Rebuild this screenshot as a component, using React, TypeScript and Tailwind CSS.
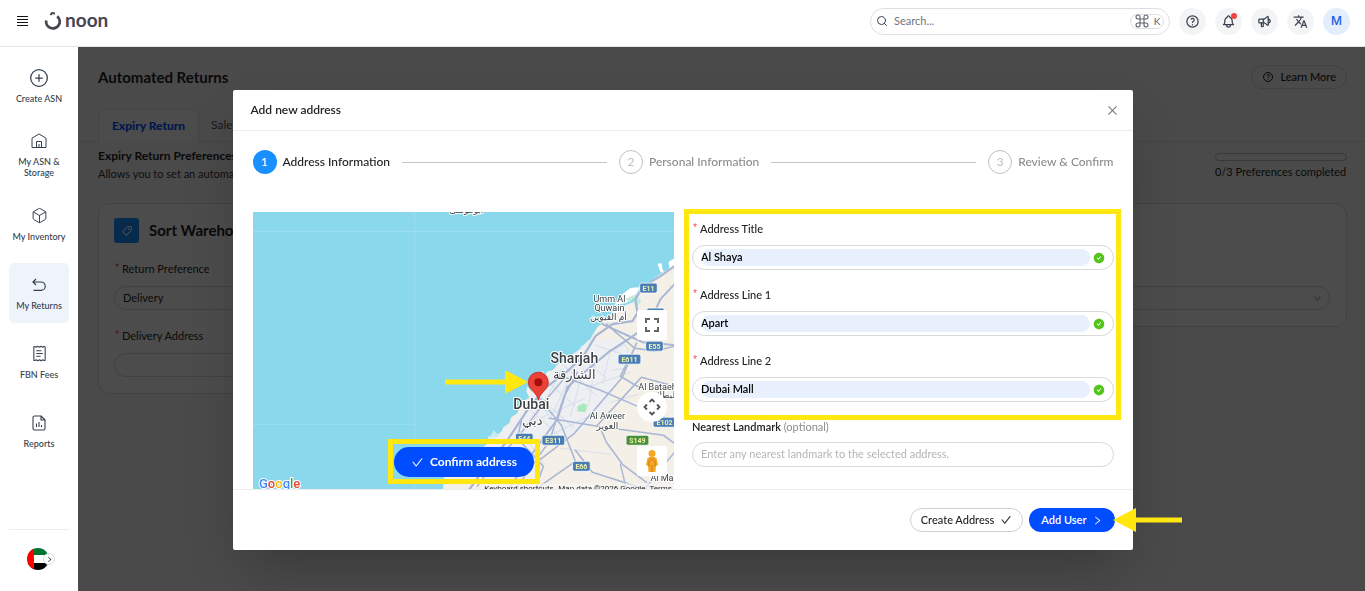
import React, { useState } from "react";
import { CirclePlus, Box, ReceiptText, Command, Search } from "lucide-react";
import { TbSpeakerphone, TbBell, TbHelp } from "react-icons/tb";
import { MdTranslate } from "react-icons/md";
import {
  AiOutlineCheck,
  AiOutlineClose,
  AiOutlineRight,
  AiOutlineDown,
  AiOutlineTag,
  AiFillCheckCircle,
} from "react-icons/ai";

const HouseIcon = () => (
  <svg width="18" height="18" viewBox="0 0 18 18" fill="none" stroke="currentColor">
    <path d="M2 6.2 9 2l7 4.2v9.3H2z" strokeLinejoin="round" />
    <path d="M6.5 15.5v-6h5v6M9 12v3.500" />
  </svg>
);

const ReturnIcon = () => (
  <svg width="18" height="18" viewBox="0 0 18 18" fill="none" stroke="currentColor" strokeWidth="1.200">
    <path d="M6 3 3 6l3 3M3.200 6H11a4.200 4.200 0 0 1 0 8.400H3.500" />
  </svg>
);

const ReportIcon = () => (
  <svg width="18" height="18" viewBox="0 0 18 18" fill="none" stroke="currentColor" strokeWidth="1.100">
    <path d="M11 2H4.500A1.500 1.500 0 0 0 3 3.500v11A1.500 1.500 0 0 0 4.500 16h9a1.500 1.500 0 0 0 1.500-1.500V6zM11 2v4h4" strokeLinejoin="round" />
    <path d="M6.500 9.500V13M9 8v5M11.500 11v2" />
  </svg>
);

const navItems = [
  { label: "Create ASN", icon: <CirclePlus size={20} strokeWidth={1.5} /> },
  { label: "My ASN & Storage", icon: <HouseIcon /> },
  { label: "My Inventory", icon: <Box size={17} strokeWidth={1.4} /> },
  { label: "My Returns", icon: <ReturnIcon />, active: true },
  { label: "FBN Fees", icon: <ReceiptText size={17} strokeWidth={1.5} /> },
  { label: "Reports", icon: <ReportIcon /> },
];

const Required = () => (
  <span className="font-['Liberation_Mono',monospace] text-[10px] leading-4 text-[#ff4d4f]">*</span>
);

function Header() {
  return (
    <header className="relative z-30 flex h-[47px] items-center border-b border-[#e5e5e5] bg-white pb-1 pl-[17px] pr-[15px]">
      <button aria-label="Menu" className="flex h-[10px] w-[11px] flex-col justify-between">
        <span className="h-px w-full bg-[#111]" />
        <span className="h-px w-full bg-[#111]" />
        <span className="h-px w-full bg-[#111]" />
        <span className="h-px w-full bg-[#111]" />
      </button>
      <a href="#" className="ml-4 flex items-center gap-[3px] text-[#45454f]">
        <svg width="18" height="20" viewBox="0 0 18 20" fill="none" stroke="currentColor">
          <path d="M2.200 9.500a6.800 6.800 0 1 0 11-4.200" strokeWidth="2.800" />
          <path d="M6.500 4 8 2l3 .4" strokeWidth="2" />
        </svg>
        <span className="pb-[3px] text-[19px] font-bold leading-5">noon</span>
      </a>
      <div className="ml-auto flex items-center gap-[9px] text-[#3b4150]">
        <div className="flex h-[27px] w-[300px] items-center rounded-full border border-[#dcdfe4] px-[5px]">
          <Search size={12} strokeWidth={2} />
          <input
            type="text"
            aria-label="Search"
            placeholder="Search..."
            className="ml-[6px] min-w-0 flex-1 text-[11px] outline-none placeholder:text-[#707580]"
          />
          <span className="flex h-[15px] w-[34px] items-center justify-center gap-1 rounded-full border border-[#dcdfe4] text-[10px] text-[#5b606b]">
            <Command size={16} strokeWidth={1.6} className="shrink-0" />K
          </span>
        </div>
        <button aria-label="Help" className="flex size-[27px] items-center justify-center rounded-full bg-[#f3f4f6]">
          <TbHelp size={15} />
        </button>
        <button aria-label="Notifications" className="relative flex size-[27px] items-center justify-center rounded-full bg-[#f3f4f6]">
          <TbBell size={15} />
          <span className="absolute right-[5px] top-[5px] size-[6px] rounded-full bg-[#ef4444]" />
        </button>
        <button aria-label="Announcements" className="flex size-[27px] items-center justify-center rounded-full bg-[#f3f4f6]">
          <TbSpeakerphone size={15} />
        </button>
        <button aria-label="Language" className="flex size-[27px] items-center justify-center rounded-full bg-[#f3f4f6]">
          <MdTranslate size={15} />
        </button>
        <button className="flex size-[27px] items-center justify-center rounded-full bg-[#e3eefc] font-['Inter',sans-serif] text-[12px] font-medium text-[#1d5be0]">
          M
        </button>
      </div>
    </header>
  );
}

function Sidebar() {
  return (
    <aside className="relative z-30 flex w-[78px] shrink-0 flex-col bg-white px-[9px] pt-[9px]">
      <nav className="flex flex-col gap-[9px]">
        {navItems.map((item) => (
          <a
            key={item.label}
            href="#"
            className={
              item.active
                ? "flex h-[60px] flex-col items-center justify-center gap-[6px] rounded-[5px] bg-[#eff3fa] text-[#34404f]"
                : "flex h-[60px] flex-col items-center justify-center gap-[6px] rounded-[5px] text-[#34404f]"
            }
          >
            <span className="flex h-[18px] items-center">{item.icon}</span>
            <span className="text-center text-[9px] font-medium leading-[11px]">{item.label}</span>
          </a>
        ))}
      </nav>
      <div className="mb-[21px] mt-auto border-t border-[#ececec] pl-[18px] pt-[18px]">
        <button aria-label="Change country" className="relative block">
          <svg width="22" height="22" viewBox="0 0 22 22">
            <clipPath id="flag">
              <circle cx="11" cy="11" r="11" />
            </clipPath>
            <g clipPath="url(#flag)">
              <rect width="22" height="22" fill="#fff" />
              <rect width="22" height="7" fill="#00732f" />
              <rect y="15" width="22" height="7" fill="#000" />
              <rect width="7" height="22" fill="#f00" />
            </g>
          </svg>
          <span className="absolute -right-[6px] top-[5px] flex size-3 items-center justify-center rounded-full border border-[#ddd] bg-white">
            <AiOutlineRight size={7} />
          </span>
        </button>
      </div>
    </aside>
  );
}

function ReturnsPage() {
  return (
    <main className="min-w-0 flex-1 bg-[#f8f8fa] pt-[18px] text-[#1f1f22]">
      <div className="flex h-6 items-center justify-between pl-5 pr-[18px]">
        <h1 className="text-[15px] font-bold">Automated Returns</h1>
        <button className="flex h-6 items-center gap-[6px] rounded-full border border-[#d9d9d9] px-[10px] text-[11px] font-medium">
          <TbHelp size={12} />
          Learn More
        </button>
      </div>
      <div className="mt-5 flex border-b border-[#e4e4e4] pl-5 text-[12px]">
        <button className="-mb-px h-[33px] w-[101px] rounded-t-lg border border-b-0 border-[#e4e4e4] bg-white font-black text-[#0050ff]">
          Expiry Return
        </button>
        <button className="px-3 text-[#555]">Sale Return</button>
      </div>
      <div className="flex justify-between pl-5 pr-[18px] pt-1">
        <div>
          <h2 className="pt-px text-[12px] font-bold leading-[18px]">Expiry Return Preferences</h2>
          <p className="text-[11px] leading-[18px] text-[#333]">Allows you to set an automatic preference</p>
        </div>
        <div className="w-[132px] pt-[7px]">
          <div className="h-2 rounded-full border border-[#bbb]" />
          <p className="pt-[3px] text-[11px] leading-4">0/3 Preferences completed</p>
        </div>
      </div>
      <div className="mt-5 grid grid-cols-2 items-start gap-4 pl-5 pr-[18px] text-[11px]">
        <section className="rounded-xl border border-[#dcdcdc] bg-white px-[15px] pb-4 pt-[14px]">
          <div className="flex h-[25px] items-center gap-[10px]">
            <span className="flex size-[25px] items-center justify-center rounded-[3px] bg-[#1890ff] text-white">
              <AiOutlineTag size={12} />
            </span>
            <h3 className="text-[15px] font-bold">Sort Warehouse</h3>
          </div>
          <label htmlFor="preference" className="mt-[18px] flex h-4 items-center gap-[2px]">
            <Required /> Return Preference
          </label>
          <select
            id="preference"
            className="mt-[9px] block h-6 w-full appearance-none rounded-full border border-[#d9d9d9] px-2"
          >
            <option>Delivery</option>
          </select>
          <label htmlFor="delivery" className="mt-[18px] flex h-4 items-center gap-[2px]">
            <Required /> Delivery Address
          </label>
          <input id="delivery" className="mt-[9px] block h-6 w-full rounded-full border border-[#d9d9d9] px-2" />
        </section>
        <section className="rounded-xl border border-[#dcdcdc] bg-white px-4 pb-4 pt-[82px]">
          <div className="relative">
            <select
              aria-label="Liquidation preference"
              className="block h-6 w-full appearance-none rounded-full border border-[#d9d9d9] px-2"
            />
            <AiOutlineDown size={9} className="absolute right-2 top-2 text-[#888]" />
          </div>
        </section>
      </div>
    </main>
  );
}

type ShieldProps = { x: number; y: number; label: string; green?: boolean };

const Shield = ({ x, y, label, green }: ShieldProps) => (
  <g>
    <rect
      x={x - label.length * 2.6 - 1}
      y={y - 5}
      width={label.length * 5.2 + 2}
      height="10"
      rx="2"
      fill={green ? "#4a8f3c" : "#4a7db5"}
      stroke="#fff"
      strokeWidth="0.8"
    />
    <text x={x} y={y + 3} fontSize="7" fontWeight="700" textAnchor="middle" fill="#f0f0a8">
      {label}
    </text>
  </g>
);

function AreaMap() {
  return (
    <svg
      viewBox="253 212 421 277"
      preserveAspectRatio="xMaxYMin slice"
      className="block h-full w-full"
      style={{ fontFamily: 'Roboto, "DejaVu Sans", sans-serif' }}
    >
      <rect x="253" y="212" width="421" height="277" fill="#8ad8eb" />
      <path d="M253 231.500H674M414.500 212V489M253 424H414" stroke="#9cdff0" strokeWidth="1" />
      {/* land */}
      <path
        d="M674 265l-14 9-11 8-6 9-6 1-4 10-8 3-14 11-6 4-8 7-5 8-4 8-7 3-4 8-8 3-5 5-7 2-4 6-6 1-2 4-3-5-1 8-2 6-4 2-3 6-5-6-1 5 3 6-4 3-5 5-3 8-6 4-2 6-6 4-3 7-7 3-6-1 3 5-9 8-11 8-12 12-15 9V489H674z"
        fill="#f4f0e7"
      />
      {/* built-up areas */}
      <path
        d="M588 340l-10 10-12 8-16 14-16 12-6 18-14 18-16 14-28 24-22 16 20 5 32-22 27-10 16-14 24 4 24-13 18-19 8-28 12-20-8-18z"
        fill="#edeff3"
      />
      <path d="M640 287l-10 1-9 7-7 10 12-2 9-8zM657 264l4-1 1 6 2 4-4-1zM668 262l6-4v9l-5 2z" fill="#fff" />
      <path d="M625 299l8-4 3 1-7 6zM637 296l-4 6 2 7 6-8z" fill="#c6eddb" />
      <path d="M577 406l6-3 4 2-2 7-8-1z" fill="#a9e8bd" />
      <path d="M536 390l4 16 8 9-3-14zM500 436l-7-6-4 8zM555 372l9-4-5 7z" fill="#c9eaf3" />
      {/* minor roads */}
      <path
        d="M545 380l30 26M540 398l34 30M530 410l32 28M560 362l36 34M574 352l32 26M520 430l24 34M556 380l-26 46M570 376l-20 42M584 366l-14 50M596 356l-8 50M610 350l-8 34M535 420l50-22M548 436l44-22M590 386l40-14M610 402l28-8M600 312l16 22M595 345l30 10M614 350l10-6 4 6-3 18-14 2M560 448l50 6M500 450l20 20"
        stroke="#d9deea"
        strokeWidth="1"
        fill="none"
      />
      {/* highways */}
      <g stroke="#a9b6d4" fill="none" strokeLinecap="round" strokeLinejoin="round">
        <path
          d="M674 266l-14 10-18 11-7 12 2 14-5 8-20 3-17 12-12 20-16 15-21 16-17 20-24 36-20 24-18 25"
          strokeWidth="2.200"
        />
        <path
          d="M674 284l-14 15-12 26-20 14-20 13-24 20-17 15-10 32-22 30-27 40M674 345l-32-3-40-18"
          strokeWidth="2"
        />
        <path
          d="M606 324l28 24 20 3 20-5M634 348l-14 28 20 12M556 374l44 16 60 26 14 4M535 393l26 32 14 36-40 28M549 418l48 8 66 9 11 8M540 459l34-26 48-56 14-34M575 450l17 22 25 8 28 9M600 428l6 14 16 22 24 18M597 425l44-48 33 9M521 421l-4 17 26 28-8 23"
          strokeWidth="1.600"
        />
        <path d="M564 378l-17 20-30 40-20 20-20 28M577 372l-14 26-14 43-34 48M620 464l6 25M674 452l-30 37" strokeWidth="1.400" />
      </g>
      <Shield x={648} y={288} label="E11" />
      <Shield x={655} y={313} label="E55" />
      <Shield x={654} y={346} label="E55" />
      <Shield x={629} y={359} label="E611" />
      <Shield x={664} y={422} label="E102" />
      <Shield x={524} y={438} label="E44" />
      <Shield x={553} y={440} label="E311" />
      <Shield x={581} y={466} label="E66" />
      <Shield x={637} y={440} label="S149" green />
      <g
        fill="#3c4043"
        stroke="#fff"
        strokeWidth="2"
        strokeLinejoin="round"
        paintOrder="stroke"
        textAnchor="middle"
        fontSize="9"
      >
        <text x="466" y="213">أبوموسى</text>
        <text x="609" y="302">Umm Al</text>
        <text x="609" y="311">Quwain</text>
        <text x="608" y="320">أم القيوين</text>
        <text x="657" y="390">Al Bataeh</text>
        <text x="664" y="398">البطائح</text>
        <text x="607" y="419">Al Aweer</text>
        <text x="607" y="429">العوير</text>
        <text x="664" y="481">Al Mad</text>
        <g fontSize="14" fontWeight="500">
          <text x="574" y="363">Sharjah</text>
          <text x="574" y="379" fontSize="13" fontWeight="400">الشارقة</text>
          <text x="531" y="409">Dubai</text>
          <text x="532" y="425" fontSize="13" fontWeight="400">دبي</text>
        </g>
      </g>
      {/* pin */}
      <path
        d="M538 400c-1-8-10-10-10-18a10 10 0 0 1 20 0c0 8-9 10-10 18z"
        fill="#ea4335"
        stroke="#c5221f"
        strokeWidth="0.8"
      />
      <circle cx="538" cy="382" r="4" fill="#a50e0e" />
      <rect x="482" y="483" width="192" height="6" fill="#f5f5f5" opacity="0.7" />
      <g fontSize="8" fill="#222">
        <text x="484" y="491">Keyboard shortcuts</text>
        <text x="558" y="491">Map data ©2026 Google</text>
        <text x="649" y="491">Terms</text>
      </g>
      <text x="259" y="488" fontSize="13" fontWeight="500" stroke="#fff" strokeWidth="2" paintOrder="stroke">
        <tspan fill="#4285f4">G</tspan>
        <tspan fill="#ea4335">o</tspan>
        <tspan fill="#fbbc04">o</tspan>
        <tspan fill="#4285f4">g</tspan>
        <tspan fill="#34a853">l</tspan>
        <tspan fill="#ea4335">e</tspan>
      </text>
    </svg>
  );
}

function MapPanel() {
  return (
    <div className="relative h-[277px] overflow-hidden">
      <AreaMap />
      <button aria-label="Fullscreen" className="absolute right-[7px] top-[98px] size-[30px] rounded-[2px] bg-white">
        <svg viewBox="0 0 30 30" fill="none" stroke="#666" strokeWidth="2">
          <path d="M9 13V9h4M17 9h4v4M21 17v4h-4M13 21H9v-4" />
        </svg>
      </button>
      <button aria-label="Map camera controls" className="absolute right-[7px] top-[180px] size-[30px] rounded-full bg-white">
        <svg viewBox="0 0 30 30" fill="none" stroke="#555" strokeWidth="1.800">
          <path d="M12.500 10l2.500-2.500 2.500 2.500M12.500 20l2.500 2.500 2.500-2.500M10 12.500l-2.500 2.500 2.500 2.500M20 12.500l2.500 2.500-2.500 2.500" />
        </svg>
      </button>
      <button aria-label="Street View" className="absolute right-[7px] top-[234px] size-[30px] rounded-[2px] bg-white">
        <svg viewBox="0 0 30 30">
          <circle cx="15" cy="7.500" r="3.500" fill="#f5a623" />
          <path d="M10.500 12q4.500-2 9 0l1.500 7-2 1-.5 6h-7l-.5-6-2-1z" fill="#f5a623" />
          <path d="M12.500 11.500l2.500 3 2.500-3M15 19v7M12 14v6M18 14v6" stroke="#c77716" strokeWidth="0.9" fill="none" />
        </svg>
      </button>
      <svg width="83" height="24" viewBox="0 0 83 24" className="absolute right-[146px] top-[158px]" fill="#ffe70f">
        <path d="M0 9.500h60V0l23 12-23 12v-9.500H0z" />
      </svg>
      <div className="absolute bottom-[5px] right-[134px] border-[5px] border-[#ffe70f] px-px pb-[2px] pt-[3px]">
        <button className="flex h-[30px] w-[140px] items-center justify-center gap-[6px] rounded-full bg-[#004cff] text-[12px] font-bold text-white">
          <AiOutlineCheck size={13} />
          Confirm address
        </button>
      </div>
    </div>
  );
}

type FieldProps = {
  id: string;
  label: string;
  value: string;
  onChange: (value: string) => void;
};

function Field({ id, label, value, onChange }: FieldProps) {
  return (
    <div className="pb-[17px]">
      <label htmlFor={id} className="mb-2 flex h-4 items-center gap-[2px] text-[11px] font-medium">
        <Required /> {label}
      </label>
      <div className="flex h-[25px] items-center gap-[3px] rounded-full border border-[#d9d9d9] px-2">
        <input
          id={id}
          type="text"
          value={value}
          onChange={(e) => onChange(e.target.value)}
          className="h-[17px] min-w-0 flex-1 rounded-full bg-[#e8f0fe] pb-[2px] text-[11px] font-semibold text-black outline-none"
        />
        <AiFillCheckCircle size={12} color="#52c41a" />
      </div>
    </div>
  );
}

function AddressModal() {
  const [title, setTitle] = useState("Al Shaya");
  const [line1, setLine1] = useState("Apart");
  const [line2, setLine2] = useState("Dubai Mall");

  return (
    <div className="fixed inset-0 z-40 flex items-start justify-center pt-[90px]">
      <div role="dialog" aria-label="Add new address" className="w-full max-w-[900px] rounded-[2px] bg-white text-[#222] shadow-2xl">
        <div className="flex h-[41px] items-center justify-between border-b border-[#ececec] pl-[18px] pr-[14px]">
          <h2 className="text-[12px] font-semibold">Add new address</h2>
          <button aria-label="Close" className="text-[#777]">
            <AiOutlineClose size={13} />
          </button>
        </div>
        <div className="pl-5 pr-[19px] pt-[19px]">
          <ol className="flex items-center gap-3 text-[12px] text-[#8c8c8c]">
            <li className="flex items-center gap-[6px] font-medium text-[#222]">
              <span className="flex size-6 items-center justify-center rounded-full bg-[#1890ff] text-white">1</span>
              Address Information
            </li>
            <li aria-hidden="true" className="h-px flex-1 bg-[#c4c4c4]" />
            <li className="flex items-center gap-[6px] font-medium">
              <span className="flex size-6 items-center justify-center rounded-full border border-[#bfbfbf] font-normal text-[#bfbfbf]">2</span>
              Personal Information
            </li>
            <li aria-hidden="true" className="h-px flex-1 bg-[#c4c4c4]" />
            <li className="flex items-center gap-[6px] font-medium">
              <span className="flex size-6 items-center justify-center rounded-full border border-[#bfbfbf] font-normal text-[#bfbfbf]">3</span>
              Review &amp; Confirm
            </li>
          </ol>
          <div className="mt-[38px] grid grid-cols-2 gap-[18px]">
            <MapPanel />
            <form className="pt-[9px]">
              <div className="relative">
                <Field id="title" label="Address Title" value={title} onChange={setTitle} />
                <Field id="line1" label="Address Line 1" value={line1} onChange={setLine1} />
                <Field id="line2" label="Address Line 2" value={line2} onChange={setLine2} />
                <div className="pointer-events-none absolute -bottom-px -left-2 -right-[7px] -top-3 border-[5px] border-[#ffe70f]" />
              </div>
              <label htmlFor="landmark" className="mb-[7px] block text-[11px] font-semibold leading-4">
                Nearest Landmark <span className="font-normal text-[#8c8c8c]">(optional)</span>
              </label>
              <input
                id="landmark"
                type="text"
                placeholder="Enter any nearest landmark to the selected address."
                className="block h-[25px] w-full rounded-full border border-[#d9d9d9] px-2 pb-[2px] text-[11px] outline-none placeholder:text-[#b5b5b5]"
              />
            </form>
          </div>
        </div>
        <div className="relative flex h-[61px] items-center justify-end gap-[6px] border-t border-[#ececec] pr-[18px] text-[11px]">
          <button className="flex h-6 items-center gap-[6px] rounded-full border border-[#d0d0d0] px-[10px] font-medium">
            Create Address
            <AiOutlineCheck size={12} />
          </button>
          <button className="flex h-6 items-center gap-[5px] rounded-full bg-[#004cff] px-3 font-semibold text-white">
            Add User
            <AiOutlineRight size={11} />
          </button>
          <svg width="69" height="24" viewBox="0 0 69 24" className="absolute -right-[49px] top-[18px]" fill="#ffe70f">
            <path d="M69 9.500H23V0L0 12l23 12v-9.500h46z" />
          </svg>
        </div>
      </div>
    </div>
  );
}

export default function App() {
  return (
    <div className="flex min-h-screen flex-col font-['Lato','Noto_Sans',sans-serif]">
      <Header />
      <div className="flex flex-1">
        <Sidebar />
        <ReturnsPage />
      </div>
      <div className="fixed inset-0 z-20 bg-black/70" />
      <AddressModal />
    </div>
  );
}
